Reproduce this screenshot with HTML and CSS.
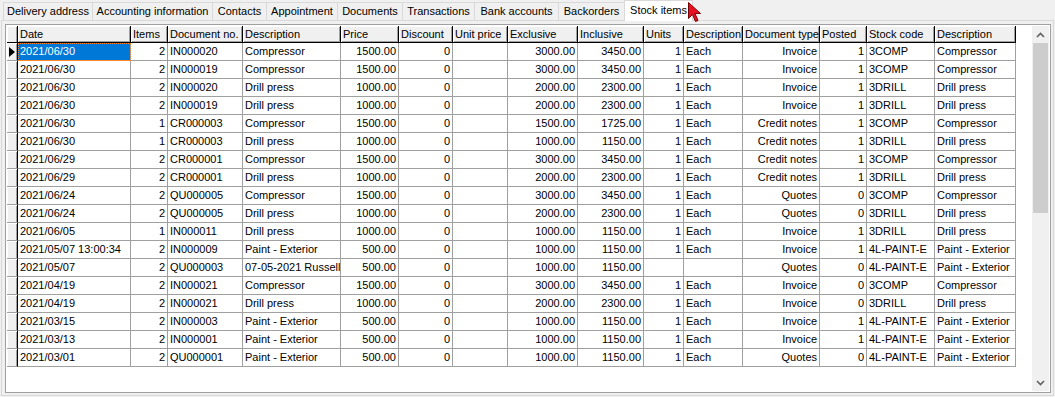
FILE: index.html
```html
<!DOCTYPE html>
<html>
<head>
<meta charset="utf-8">
<link rel="stylesheet" href="styles.css">
</head>
<body>
<div class="tabs">
  <div class="tab w1">Delivery address</div>
  <div class="tab w2">Accounting information</div>
  <div class="tab w3">Contacts</div>
  <div class="tab w4">Appointment</div>
  <div class="tab w5">Documents</div>
  <div class="tab w6">Transactions</div>
  <div class="tab w7">Bank accounts</div>
  <div class="tab w8">Backorders</div>
  <div class="tab w9 active">Stock items</div>
</div>
<div class="panel">
  <div class="grid">
    <div class="body">
      <div class="row head"><div class="ind"></div><div>Date</div><div>Items</div><div>Document no.</div><div>Description</div><div>Price</div><div>Discount</div><div>Unit price</div><div>Exclusive</div><div>Inclusive</div><div>Units</div><div>Description</div><div>Document type</div><div>Posted</div><div>Stock code</div><div>Description</div></div>
      <div class="row"><div class="ind cur"></div><div class="sel">2021/06/30</div><div>2</div><div>IN000020</div><div>Compressor</div><div>1500.00</div><div>0</div><div></div><div>3000.00</div><div>3450.00</div><div>1</div><div>Each</div><div>Invoice</div><div>1</div><div>3COMP</div><div>Compressor</div></div>
      <div class="row"><div class="ind"></div><div>2021/06/30</div><div>2</div><div>IN000019</div><div>Compressor</div><div>1500.00</div><div>0</div><div></div><div>3000.00</div><div>3450.00</div><div>1</div><div>Each</div><div>Invoice</div><div>1</div><div>3COMP</div><div>Compressor</div></div>
      <div class="row"><div class="ind"></div><div>2021/06/30</div><div>2</div><div>IN000020</div><div>Drill press</div><div>1000.00</div><div>0</div><div></div><div>2000.00</div><div>2300.00</div><div>1</div><div>Each</div><div>Invoice</div><div>1</div><div>3DRILL</div><div>Drill press</div></div>
      <div class="row"><div class="ind"></div><div>2021/06/30</div><div>2</div><div>IN000019</div><div>Drill press</div><div>1000.00</div><div>0</div><div></div><div>2000.00</div><div>2300.00</div><div>1</div><div>Each</div><div>Invoice</div><div>1</div><div>3DRILL</div><div>Drill press</div></div>
      <div class="row"><div class="ind"></div><div>2021/06/30</div><div>1</div><div>CR000003</div><div>Compressor</div><div>1500.00</div><div>0</div><div></div><div>1500.00</div><div>1725.00</div><div>1</div><div>Each</div><div>Credit notes</div><div>1</div><div>3COMP</div><div>Compressor</div></div>
      <div class="row"><div class="ind"></div><div>2021/06/30</div><div>1</div><div>CR000003</div><div>Drill press</div><div>1000.00</div><div>0</div><div></div><div>1000.00</div><div>1150.00</div><div>1</div><div>Each</div><div>Credit notes</div><div>1</div><div>3DRILL</div><div>Drill press</div></div>
      <div class="row"><div class="ind"></div><div>2021/06/29</div><div>2</div><div>CR000001</div><div>Compressor</div><div>1500.00</div><div>0</div><div></div><div>3000.00</div><div>3450.00</div><div>1</div><div>Each</div><div>Credit notes</div><div>1</div><div>3COMP</div><div>Compressor</div></div>
      <div class="row"><div class="ind"></div><div>2021/06/29</div><div>2</div><div>CR000001</div><div>Drill press</div><div>1000.00</div><div>0</div><div></div><div>2000.00</div><div>2300.00</div><div>1</div><div>Each</div><div>Credit notes</div><div>1</div><div>3DRILL</div><div>Drill press</div></div>
      <div class="row"><div class="ind"></div><div>2021/06/24</div><div>2</div><div>QU000005</div><div>Compressor</div><div>1500.00</div><div>0</div><div></div><div>3000.00</div><div>3450.00</div><div>1</div><div>Each</div><div>Quotes</div><div>0</div><div>3COMP</div><div>Compressor</div></div>
      <div class="row"><div class="ind"></div><div>2021/06/24</div><div>2</div><div>QU000005</div><div>Drill press</div><div>1000.00</div><div>0</div><div></div><div>2000.00</div><div>2300.00</div><div>1</div><div>Each</div><div>Quotes</div><div>0</div><div>3DRILL</div><div>Drill press</div></div>
      <div class="row"><div class="ind"></div><div>2021/06/05</div><div>1</div><div>IN000011</div><div>Drill press</div><div>1000.00</div><div>0</div><div></div><div>1000.00</div><div>1150.00</div><div>1</div><div>Each</div><div>Invoice</div><div>1</div><div>3DRILL</div><div>Drill press</div></div>
      <div class="row"><div class="ind"></div><div>2021/05/07 13:00:34</div><div>2</div><div>IN000009</div><div>Paint - Exterior</div><div>500.00</div><div>0</div><div></div><div>1000.00</div><div>1150.00</div><div>1</div><div>Each</div><div>Invoice</div><div>1</div><div>4L-PAINT-E</div><div>Paint - Exterior</div></div>
      <div class="row"><div class="ind"></div><div>2021/05/07</div><div>2</div><div>QU000003</div><div>07-05-2021 Russell</div><div>500.00</div><div>0</div><div></div><div>1000.00</div><div>1150.00</div><div></div><div></div><div>Quotes</div><div>0</div><div>4L-PAINT-E</div><div>Paint - Exterior</div></div>
      <div class="row"><div class="ind"></div><div>2021/04/19</div><div>2</div><div>IN000021</div><div>Compressor</div><div>1500.00</div><div>0</div><div></div><div>3000.00</div><div>3450.00</div><div>1</div><div>Each</div><div>Invoice</div><div>0</div><div>3COMP</div><div>Compressor</div></div>
      <div class="row"><div class="ind"></div><div>2021/04/19</div><div>2</div><div>IN000021</div><div>Drill press</div><div>1000.00</div><div>0</div><div></div><div>2000.00</div><div>2300.00</div><div>1</div><div>Each</div><div>Invoice</div><div>0</div><div>3DRILL</div><div>Drill press</div></div>
      <div class="row"><div class="ind"></div><div>2021/03/15</div><div>2</div><div>IN000003</div><div>Paint - Exterior</div><div>500.00</div><div>0</div><div></div><div>1000.00</div><div>1150.00</div><div>1</div><div>Each</div><div>Invoice</div><div>1</div><div>4L-PAINT-E</div><div>Paint - Exterior</div></div>
      <div class="row"><div class="ind"></div><div>2021/03/13</div><div>2</div><div>IN000001</div><div>Paint - Exterior</div><div>500.00</div><div>0</div><div></div><div>1000.00</div><div>1150.00</div><div>1</div><div>Each</div><div>Invoice</div><div>1</div><div>4L-PAINT-E</div><div>Paint - Exterior</div></div>
      <div class="row"><div class="ind"></div><div>2021/03/01</div><div>2</div><div>QU000001</div><div>Paint - Exterior</div><div>500.00</div><div>0</div><div></div><div>1000.00</div><div>1150.00</div><div>1</div><div>Each</div><div>Quotes</div><div>0</div><div>4L-PAINT-E</div><div>Paint - Exterior</div></div>
    </div>
    <div class="scrollbar">
      <div class="sbtn"><svg width="9" height="6" viewBox="0 0 9 6"><path d="M1 5 L4.5 1.5 L8 5" fill="none" stroke="#606060" stroke-width="1.6"/></svg></div>
      <div class="thumb"></div>
      <div class="track"></div>
      <div class="sbtn"><svg width="9" height="6" viewBox="0 0 9 6"><path d="M1 1 L4.5 4.5 L8 1" fill="none" stroke="#606060" stroke-width="1.6"/></svg></div>
    </div>
  </div>
</div>
<svg class="cursor" width="14" height="22" viewBox="0 0 14 22"><path d="M0.5 0.5 L0.5 16.5 L4.5 12.5 L7.5 19.5 L10 18.5 L7 11.5 L12.5 11.5 Z" fill="#e81123" stroke="#7a0000" stroke-width="1"/></svg>
</body>
</html>
```
FILE: styles.css
```css
html, body {
  margin: 0;
  padding: 0;
}
body {
  background: #f0f0f0;
  font-family: "Liberation Sans", Arial, sans-serif;
  font-size: 11px;
  color: #000;
  width: 1055px;
  height: 397px;
  overflow: hidden;
  position: relative;
}
.tabs {
  display: flex;
  align-items: flex-end;
  height: 20px;
  padding-left: 3px;
  position: relative;
  z-index: 2;
}
.tab {
  box-sizing: border-box;
  height: 18px;
  border: 1px solid #d9d9d9;
  border-bottom: none;
  margin-right: -1px;
  background: #f0f0f0;
  text-align: center;
  line-height: 17px;
  white-space: nowrap;
}
.tab.active {
  height: 21px;
  margin-bottom: -1px;
  background: #fff;
  border-color: #d9d9d9;
  line-height: 18px;
  padding-bottom: 2px;
}
.w1 { width: 90px; }
.w2 { width: 121px; }
.w3 { width: 55px; }
.w4 { width: 72px; }
.w5 { width: 66px; }
.w6 { width: 73px; }
.w7 { width: 85px; }
.w8 { width: 67px; }
.w9 { width: 69px; }
.panel {
  box-sizing: border-box;
  margin: 0 1px;
  height: 376px;
  border: 1px solid #d9d9d9;
  padding: 3px 2px 2px 3px;
  background: #f0f0f0;
}
.grid {
  box-sizing: border-box;
  height: 369px;
  display: flex;
  background: #fff;
  border: 1px solid #a0a0a0;
  padding: 1px;
}
.body {
  flex: 1;
  overflow: hidden;
}
.row {
  display: grid;
  grid-template-columns: 11px 113px 37px 75px 98px 58px 54px 55px 70px 66px 40px 59px 77px 47px 68px 81px;
}
.row > div {
  box-sizing: border-box;
  height: 18px;
  line-height: 17px;
  padding: 0 2px;
  border-right: 1px solid #a0a0a0;
  border-bottom: 1px solid #a0a0a0;
  white-space: nowrap;
  overflow: hidden;
}
.row > :nth-child(3),
.row > :nth-child(6),
.row > :nth-child(7),
.row > :nth-child(8),
.row > :nth-child(9),
.row > :nth-child(10),
.row > :nth-child(11),
.row > :nth-child(13),
.row > :nth-child(14) {
  text-align: right;
}
.head > div {
  height: 17px;
  line-height: 15px;
  padding-top: 1px;
  background: #f0f0f0;
  border-right-color: #000;
  border-bottom-color: #000;
  box-shadow: inset 1px 1px #fff, inset -1px -1px #a0a0a0;
  text-align: left !important;
}
.row > .ind {
  background: #f0f0f0;
  border-right-color: #000;
  box-shadow: inset 1px 1px #fff, inset -1px 0 #a0a0a0;
  position: relative;
  padding: 0;
}
.head > .ind {
  border-right-color: #000;
}
.cur::after {
  content: "";
  position: absolute;
  left: 2px;
  top: 4px;
  border-left: 6px solid #000;
  border-top: 5px solid transparent;
  border-bottom: 5px solid transparent;
}
.row > .sel {
  background: #0078d7;
  color: #fff;
  outline: 1px dotted #ff8728;
  outline-offset: -1px;
}
.scrollbar {
  width: 17px;
  background: #f0f0f0;
  display: flex;
  flex-direction: column;
}
.sbtn {
  height: 17px;
  display: flex;
  align-items: center;
  justify-content: center;
}
.thumb {
  height: 170px;
  margin: 0 1px;
  background: #cdcdcd;
}
.track {
  flex: 1;
}
.cursor {
  position: absolute;
  left: 688px;
  top: 2px;
  z-index: 5;
}
```
